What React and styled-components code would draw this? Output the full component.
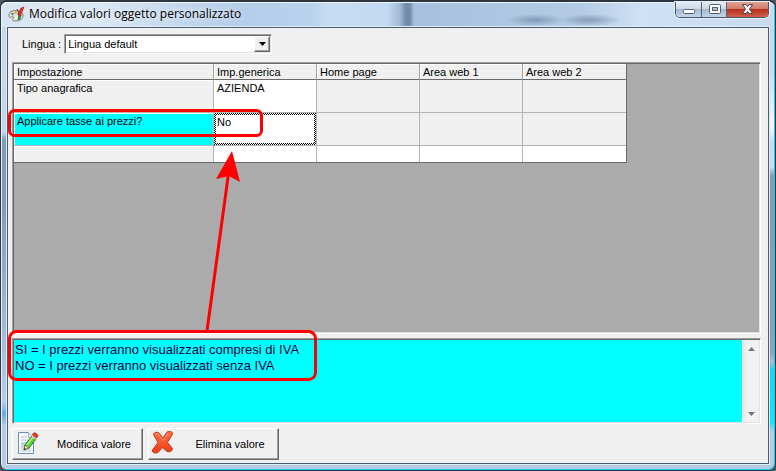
import React, { useState } from "react";
import styled, { createGlobalStyle, css } from "styled-components";

const GlobalStyle = createGlobalStyle`
  *, *::before, *::after {
    box-sizing: border-box;
  }

  body {
    margin: 0;
    background: #55585c;
    font-family: "Liberation Sans", Arial, sans-serif;
    font-size: 11px;
    line-height: 14px;
    color: #000;
  }

  button, select, textarea {
    font: inherit;
    color: inherit;
  }
`;

const sunken = css`
  border: 1px solid;
  border-color: #a0a0a0 #fff #fff #a0a0a0;
  box-shadow: inset 1px 1px 0 #696969, inset -1px -1px 0 #e3e3e3;
`;

const raised = css`
  border: 1px solid;
  border-color: #fff #696969 #696969 #fff;
  box-shadow: inset -1px -1px 0 #a0a0a0;
`;

const Window = styled.div`
  position: relative;
  display: flex;
  flex-direction: column;
  min-height: 100vh;
  padding: 0 6px 6px;
  border: 1px solid #2c3540;
  border-width: 2px 1px 1px;
  border-radius: 7px;
  background: linear-gradient(
        180deg,
        #c3d5e8 0,
        #c8dcf0 70px,
        #f4f9ff 125px,
        #c3dbf6 140px,
        #c8dcf5 165px,
        #8299b8 174px,
        #8aa0be 350px,
        #a9bcd8 360px,
        #14d8f0 368px,
        #14e4fa 420px,
        #b4cde8 430px,
        #b5cce4 100%
      )
      right / 8px 100% no-repeat,
    linear-gradient(
      180deg,
      #cbdaea 0,
      #c4d6ea 130px,
      #8299b8 138px,
      #8299b8 200px,
      #a3bbd6 330px,
      #b4cde8 400px,
      #69a9e6 412px,
      #b5cce4 424px,
      #b5cce4 100%
    );
  box-shadow: inset 1px 1px 0 #e8f3fc, inset -1px -1px 0 #20cdf0;
`;

const TitleBar = styled.header`
  display: flex;
  align-items: flex-start;
  height: 25px;
  margin: 0 -5px;
  padding: 0 5px 0 6px;
  border-radius: 5px 5px 0 0;
  background: radial-gradient(
        ellipse at center,
        rgba(70, 96, 126, 0.45),
        rgba(70, 96, 126, 0) 70%
      )
      503px 12px / 60px 12px no-repeat,
    radial-gradient(
        ellipse at center,
        rgba(70, 96, 126, 0.45),
        rgba(70, 96, 126, 0) 70%
      )
      556px 12px / 64px 12px no-repeat,
    linear-gradient(
      90deg,
      #d8e4f0 0,
      #dbe8f5 90px,
      #c3d7ec 180px,
      #b4cde8 240px,
      #b9d3ee 310px,
      #c5dcf3 325px,
      #c2d9f1 385px,
      #a2bad4 398px,
      #718da9 404px,
      #718da9 408px,
      #a6c1dd 412px,
      #adc7e2 500px,
      #b4cbe4 580px,
      #cfe2f5 640px,
      #c8dbee 100%
    );
  box-shadow: inset 0 1px 0 #edf6fd;
`;

const Title = styled.h1`
  flex: 1;
  margin: 0 0 0 4px;
  font-family: "Open Sans", "Segoe UI", sans-serif;
  font-size: 12px;
  font-weight: 400;
  line-height: 24px;
  text-shadow: 0 0 6px #fff;
  white-space: nowrap;
`;

const AppIcon = styled.svg`
  flex: none;
  margin-top: 4px;
`;

const WindowButtons = styled.div`
  display: flex;
  height: 16px;
  border: 1px solid #4a5a6e;
  border-top: 0;
  border-radius: 0 0 5px 5px;
  overflow: hidden;
  box-shadow: 0 0 0 1px #e4eef8;
`;

const WindowButton = styled.button`
  display: flex;
  align-items: center;
  justify-content: center;
  width: ${({ $close }) => ($close ? "42px" : "25px")};
  padding: 0;
  border: 0;
  border-left: ${({ $first }) => ($first ? "0" : "1px solid #53657c")};
  background: ${({ $close }) =>
    $close
      ? "linear-gradient(#e0a497 0, #d27967 45%, #b9301b 50%, #d0604c 100%)"
      : "linear-gradient(#e4edf6 0, #ccd8e6 45%, #a5b8ce 50%, #c3d5e8 100%)"};
`;

const Client = styled.main`
  flex: 1;
  display: flex;
  flex-direction: column;
  padding: 6px 7px 3px 4px;
  border: 1px solid #4c5b6c;
  background: #f0f0f0;
  box-shadow: 0 0 0 1px #e0edf8;
`;

const LanguageRow = styled.div`
  display: flex;
  align-items: center;
  gap: 3px;
  margin-bottom: 8px;
  padding-left: 10px;
`;

const Combo = styled.div`
  ${sunken}
  position: relative;
  width: 208px;
  height: 20px;
  padding: 1px;
  background: #fff;
`;

const Select = styled.select`
  width: 100%;
  height: 16px;
  padding: 0 20px 0 2px;
  border: 0;
  background: transparent;
  appearance: none;
  outline: none;
`;

const ComboArrow = styled.span`
  ${raised}
  position: absolute;
  top: 1px;
  right: 1px;
  display: flex;
  align-items: center;
  justify-content: center;
  width: 16px;
  height: 16px;
  background: #f0f0f0;
  pointer-events: none;
`;

const GridPanel = styled.section`
  ${sunken}
  flex: 1;
  margin-bottom: 4px;
  padding: 1px;
  background: #ababab;
`;

const Table = styled.table`
  width: 613px;
  table-layout: fixed;
  border-collapse: separate;
  border-spacing: 0;
  border-right: 1px solid #696969;
  border-bottom: 1px solid #696969;
`;

const HeaderCell = styled.th`
  height: 16px;
  padding: 0 3px;
  border-right: 1px solid #a0a0a0;
  border-bottom: 1px solid #696969;
  background: #f0f0f0;
  box-shadow: inset 1px 1px 0 #fff;
  font-weight: 400;
  text-align: left;

  &:last-child {
    border-right: 0;
  }
`;

const Cell = styled.td`
  height: ${({ $short }) => ($short ? "16px" : "33px")};
  padding: ${({ $focused }) => ($focused ? "0" : "1px 3px")};
  border-right: 1px solid #b4b4b4;
  border-bottom: ${({ $short }) => ($short ? "0" : "1px solid #b4b4b4")};
  background: ${({ $selected, $white }) =>
    $selected ? "#00ffff" : $white ? "#fff" : "#f0f0f0"};
  box-shadow: ${({ $label }) => ($label ? "inset 1px 1px 0 #fff" : "none")};
  vertical-align: top;

  &:last-child {
    border-right: 0;
  }
`;

const FocusFrame = styled.div`
  height: 32px;
  padding: 0 1px;
  border: 2px solid transparent;
  background: linear-gradient(#fff, #fff) padding-box,
    repeating-conic-gradient(#000 0 25%, #fff 0 50%) 0 0 / 2px 2px border-box;
`;

const Memo = styled.section`
  ${sunken}
  display: flex;
  height: 86px;
  margin-bottom: 4px;
  padding: 1px;
  background: #f0f0f0;
`;

const MemoText = styled.textarea`
  flex: 1;
  display: block;
  min-width: 0;
  padding: 2px 1px;
  border: 0;
  outline: none;
  resize: none;
  overflow: hidden;
  background: #00ffff;
  color: #000040;
  font-size: 13px;
  line-height: 16px;
`;

const ScrollBar = styled.div`
  display: flex;
  flex-direction: column;
  justify-content: space-between;
  width: 17px;
  border-left: 1px solid #fff;
  background: linear-gradient(90deg, #e6e6e6, #f3f3f3 30%, #f0f0f0);
`;

const ScrollButton = styled.button`
  display: flex;
  align-items: center;
  justify-content: center;
  height: 17px;
  padding: 0;
  border: 0;
  background: transparent;
`;

const Actions = styled.footer`
  display: flex;
  gap: 5px;
`;

const ActionButton = styled.button`
  ${raised}
  display: flex;
  align-items: center;
  width: 131px;
  height: 32px;
  padding: 0 1px 0 2px;
  background: #f0f0f0;

  svg {
    flex: none;
    margin-bottom: 4px;
  }

  span {
    flex: 1;
    padding-left: 6px;
    text-align: center;
  }
`;

const Annotations = styled.svg`
  position: absolute;
  top: -2px;
  left: -1px;
  pointer-events: none;
`;

const columns = [
  "Impostazione",
  "Imp.generica",
  "Home page",
  "Area web 1",
  "Area web 2",
];

const rows = [
  { label: "Tipo anagrafica", value: "AZIENDA" },
  { label: "Applicare tasse ai prezzi?", value: "No", selected: true },
  { label: "", value: "", short: true },
];

const PaletteIcon = () => (
  <AppIcon width="17" height="16" viewBox="0 0 17 16" aria-hidden="true">
    <path
      d="M1 9.500C1 6 4 4.500 8 4.500s7 2 7 5-3 5.500-8 5.500c-3 0-3-2-1.500-3 1-1-1-2-2-1-1.500 1-2.500.5-2.500-1.500z"
      fill="#e4e4d8"
      stroke="#77776d"
    />
    <circle cx="4.500" cy="8" r="1.300" fill="#2c9aa8" />
    <circle cx="7.500" cy="6.500" r="1.200" fill="#d4a929" />
    <path d="M6 12l3-3 2 3-2 2z" fill="#fff" />
    <path d="M9.500 14l1-6 3 1-1.500 5z" fill="#268d35" />
    <path d="M16 1l-3.500 9-3-1.500L13 2z" fill="#f02c18" stroke="#8d2018" strokeWidth=".5" />
    <path d="M9 3l2 5" stroke="#444" />
  </AppIcon>
);

const EditIcon = () => (
  <svg width="26" height="26" viewBox="0 0 26 26" aria-hidden="true">
    <path d="M3.500 3.500h10l5 5v16h-15z" fill="#f7faff" stroke="#6f8dbd" />
    <path d="M13.500 3.500v5h5" fill="#dfe9f7" stroke="#9fb5d6" />
    <path d="M6 8h6M6 11h8M6 20h10M6 22h10" stroke="#b8c9e2" />
    <path d="M6 13h6v6H6z" fill="#c3d2e8" />
    <path d="M9 21l1-5 7-9 4 3-7 9z" fill="#5bd034" stroke="#2f7a1e" />
    <path d="M12 16l6-8" stroke="#a9f183" strokeWidth="1.500" />
    <path d="M9 21l1-5 4 3z" fill="#f5d9a0" stroke="#4b5a35" strokeWidth=".6" />
    <path d="M9 21l.5-2 1.500 1z" fill="#222" />
    <path d="M16.500 7.500L18 5.500l4 3-1.500 2z" fill="#d0d0d0" />
    <path d="M17.500 6c0-2 2-3 4-1.500s2 3.500 0 4.500z" fill="#e53b22" stroke="#b02a17" strokeWidth=".6" />
  </svg>
);

const DeleteIcon = () => (
  <svg width="26" height="26" viewBox="0 0 26 26" aria-hidden="true">
    <defs>
      <linearGradient id="cross" x1="0" y1="0" x2="0" y2="1">
        <stop offset="0" stopColor="#ff7048" />
        <stop offset="1" stopColor="#f23c14" />
      </linearGradient>
    </defs>
    <path
      d="M2.500 5.500C3 3 7 2.500 8.500 4.500l3.500 4.500 3.500-5.500c1.500-2 7-1 6 1.500l-5 8.500 4.500 5.500c1.500 2.500-2 4.500-5 3.500l-4.500-4-4 4.500c-2 2-7 1-6-2l5.500-7.500z"
      fill="url(#cross)"
      stroke="#c0341a"
      strokeLinejoin="round"
    />
    <path
      d="M4.500 5.500c1-1 2-1 3 0l4.500 6 5-7"
      fill="none"
      stroke="#ff9c7c"
      strokeLinecap="round"
    />
  </svg>
);

const App = () => {
  const [language, setLanguage] = useState("default");

  return (
    <>
      <GlobalStyle />
      <Window>
        <TitleBar>
          <PaletteIcon />
          <Title>Modifica valori oggetto personalizzato</Title>
          <WindowButtons>
            <WindowButton type="button" aria-label="Riduci" $first>
              <svg width="13" height="13" viewBox="0 0 13 13">
                <rect x="1.500" y="6.500" width="11" height="4" rx="1" fill="#fff" stroke="#53606f" />
              </svg>
            </WindowButton>
            <WindowButton type="button" aria-label="Ingrandisci">
              <svg width="13" height="13" viewBox="0 0 13 13">
                <rect x="1.500" y="1.500" width="11" height="9" rx="1" fill="#fff" stroke="#53606f" />
                <rect x="4.500" y="4.500" width="5" height="3" fill="#a9bdd3" stroke="#53606f" />
              </svg>
            </WindowButton>
            <WindowButton type="button" aria-label="Chiudi" $close>
              <svg width="13" height="13" viewBox="0 0 13 13">
                <path
                  d="M1.500 1.500h3.500l1.500 2 1.500-2h3.500l-3 4.500 3 4.500h-3.500l-1.500-2-1.500 2h-3.500l3-4.500z"
                  fill="#fff"
                  stroke="#54414b"
                />
              </svg>
            </WindowButton>
          </WindowButtons>
        </TitleBar>

        <Client>
          <LanguageRow>
            <label htmlFor="language">Lingua :</label>
            <Combo>
              <Select
                id="language"
                value={language}
                onChange={(e) => setLanguage(e.target.value)}
              >
                <option value="default">Lingua default</option>
              </Select>
              <ComboArrow>
                <svg width="7" height="4" viewBox="0 0 7 4">
                  <path d="M0 0h7L3.500 4z" />
                </svg>
              </ComboArrow>
            </Combo>
          </LanguageRow>

          <GridPanel>
            <Table>
              <colgroup>
                <col width="200" />
                <col width="103" />
                <col width="103" />
                <col width="103" />
                <col width="103" />
              </colgroup>
              <thead>
                <tr>
                  {columns.map((name) => (
                    <HeaderCell key={name} scope="col">
                      {name}
                    </HeaderCell>
                  ))}
                </tr>
              </thead>
              <tbody>
                {rows.map(({ label, value, selected, short }, index) => (
                  <tr key={index}>
                    <Cell $label $selected={selected} $short={short}>
                      {label}
                    </Cell>
                    <Cell $white $focused={selected} $short={short}>
                      {selected ? <FocusFrame>{value}</FocusFrame> : value}
                    </Cell>
                    {columns.slice(2).map((name) => (
                      <Cell key={name} $white={short} $short={short} />
                    ))}
                  </tr>
                ))}
              </tbody>
            </Table>
          </GridPanel>

          <Memo>
            <MemoText
              readOnly
              aria-label="Descrizione"
              value={
                "SI = I prezzi verranno visualizzati compresi di IVA\nNO = I prezzi verranno visualizzati senza IVA"
              }
            />
            <ScrollBar>
              <ScrollButton type="button" aria-label="Scorri su">
                <svg width="7" height="4" viewBox="0 0 7 4">
                  <path d="M0 4h7L3.500 0z" fill="#777" />
                </svg>
              </ScrollButton>
              <ScrollButton type="button" aria-label="Scorri giù">
                <svg width="7" height="4" viewBox="0 0 7 4">
                  <path d="M0 0h7L3.500 4z" fill="#777" />
                </svg>
              </ScrollButton>
            </ScrollBar>
          </Memo>

          <Actions>
            <ActionButton type="button">
              <EditIcon />
              <span>Modifica valore</span>
            </ActionButton>
            <ActionButton type="button">
              <DeleteIcon />
              <span>Elimina valore</span>
            </ActionButton>
          </Actions>
        </Client>

        <Annotations width="330" height="390" viewBox="0 0 330 390" aria-hidden="true">
          <g fill="none" stroke="#f00" strokeWidth="3">
            <rect x="9.500" y="110.500" width="252" height="25" rx="5" />
            <rect x="9.500" y="331.500" width="306" height="48" rx="7" />
            <path d="M207 331L229 170" />
          </g>
          <path d="M232 151l8 31-11-6-13 3z" fill="#f00" />
        </Annotations>
      </Window>
    </>
  );
};

export default App;
